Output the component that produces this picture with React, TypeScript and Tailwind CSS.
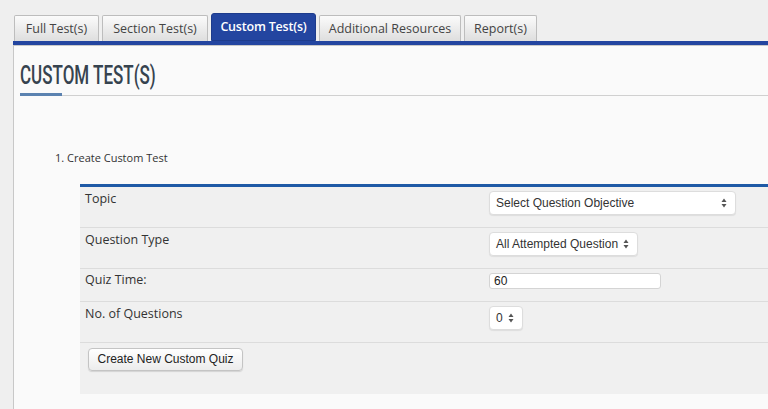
import React from 'react';

const tabs = [
  { label: 'Full Test(s)', w: 'w-[85px]' },
  { label: 'Section Test(s)', w: 'w-[106px]' },
  { label: 'Custom Test(s)', w: 'w-[105px]' },
  { label: 'Additional Resources', w: 'w-[142px]' },
  { label: 'Report(s)', w: 'w-[73px]' },
];

function Arrows() {
  return (
    <svg width="6" height="10" viewBox="0 0 6 10" className="shrink-0">
      <path d="M3 0.5 L5.5 4 H0.5 Z" fill="#555" />
      <path d="M3 9.5 L5.5 6 H0.5 Z" fill="#555" />
    </svg>
  );
}

function FakeSelect({ label, width }: { label: string; width: string }) {
  return (
    <div
      className={`${width} h-[24px] flex items-center justify-between pl-[6px] pr-[8px] bg-white border border-[#ddd] rounded-[4px] shadow-[0_1px_1px_rgba(0,0,0,0.08)] text-[12px] text-[#333]`}
      style={{ fontFamily: '"Liberation Sans", Arial, sans-serif' }}
    >
      <span>{label}</span>
      <Arrows />
    </div>
  );
}

export default function App(): JSX.Element {
  const ui = { fontFamily: '"Open Sans", "DejaVu Sans", sans-serif' };
  return (
    <div className="w-[768px] h-[409px] overflow-hidden bg-[#efefef]" style={ui}>
      {/* Tabs */}
      <div className="flex items-end gap-[3px] pl-[14px] pt-[13px] h-[41px]">
        {tabs.map((t) => {
          const active = t.label === 'Custom Test(s)';
          return active ? (
            <div
              key={t.label}
              className={`${t.w} h-[28px] flex items-center justify-center pt-[1px] bg-[#2345a0] border border-[#1d3b8c] rounded-t-[3px] text-white text-[12.5px] font-semibold tracking-[-0.2px]`}
            >
              {t.label}
            </div>
          ) : (
            <div
              key={t.label}
              className={`${t.w} h-[26px] flex items-center justify-center pt-[1px] bg-gradient-to-b from-[#fbfbfb] to-[#dedede] border border-b-0 border-[#bdbdbd] rounded-t-[2px] text-[#444] text-[12.5px]`}
            >
              {t.label}
            </div>
          );
        })}
      </div>
      <div className="ml-[13px] h-[4px] bg-[#2345a0]" />

      {/* Panel */}
      <div className="ml-[13px] h-[364px] bg-[#fafafa] border-l border-t border-[#c8c8c8]">
        <div className="pl-[6px] pt-[15px]">
          <h1 className="h-[30px] leading-[30px] text-[#36434f]">
            <span
              className="inline-block origin-left scale-x-[0.68] text-[25px] font-medium whitespace-nowrap"
              style={{ fontFamily: 'Roboto, "Liberation Sans", sans-serif' }}
            >
              CUSTOM TEST(S)
            </span>
          </h1>
          <div className="mt-[4px] relative h-[1px] bg-[#d0d0d0]">
            <div className="absolute left-0 top-[-2px] w-[42px] h-[3px] bg-[#5b82b0]" />
          </div>
        </div>

        <div className="pl-[41px] pt-[54px] text-[11px] text-[#333]">1. Create Custom Test</div>

        {/* Form table */}
        <div className="ml-[66px] mt-[17px] w-[700px] border-t-[3px] border-[#1f5aa6] bg-[#f0f0f0] text-[12.5px] text-[#333]">
          <div className="flex h-[41px] border-b border-[#dcdcdc]">
            <div className="w-[409px] pl-[5px] pt-[3px]">Topic</div>
            <div className="pt-[4px]">
              <FakeSelect label="Select Question Objective" width="w-[247px]" />
            </div>
          </div>
          <div className="flex h-[41px] border-b border-[#dcdcdc]">
            <div className="w-[409px] pl-[5px] pt-[3px]">Question Type</div>
            <div className="pt-[4px]">
              <FakeSelect label="All Attempted Question" width="w-[149px]" />
            </div>
          </div>
          <div className="flex h-[33px] border-b border-[#dcdcdc]">
            <div className="w-[409px] pl-[5px] pt-[2px]">Quiz Time:</div>
            <div className="pt-[4px]">
              <div
                className="w-[172px] h-[16px] bg-white border border-[#d4d4d4] rounded-[3px] pl-[4px] text-[12px] leading-[14px] text-[#222]"
                style={{ fontFamily: '"Liberation Sans", Arial, sans-serif' }}
              >
                60
              </div>
            </div>
          </div>
          <div className="flex h-[41px] border-b border-[#dcdcdc]">
            <div className="w-[409px] pl-[5px] pt-[3px]">No. of Questions</div>
            <div className="pt-[4px]">
              <FakeSelect label="0" width="w-[34px]" />
            </div>
          </div>
          <div className="h-[51px] pl-[8px] pt-[5px]">
            <button
              className="h-[23px] w-[155px] rounded-[4px] border border-[#c4c4c4] bg-gradient-to-b from-white to-[#ececec] shadow-[0_1px_1px_rgba(0,0,0,0.12)] text-[12px] text-[#222]"
              style={{ fontFamily: '"Liberation Sans", Arial, sans-serif' }}
            >
              Create New Custom Quiz
            </button>
          </div>
        </div>
      </div>
    </div>
  );
}
